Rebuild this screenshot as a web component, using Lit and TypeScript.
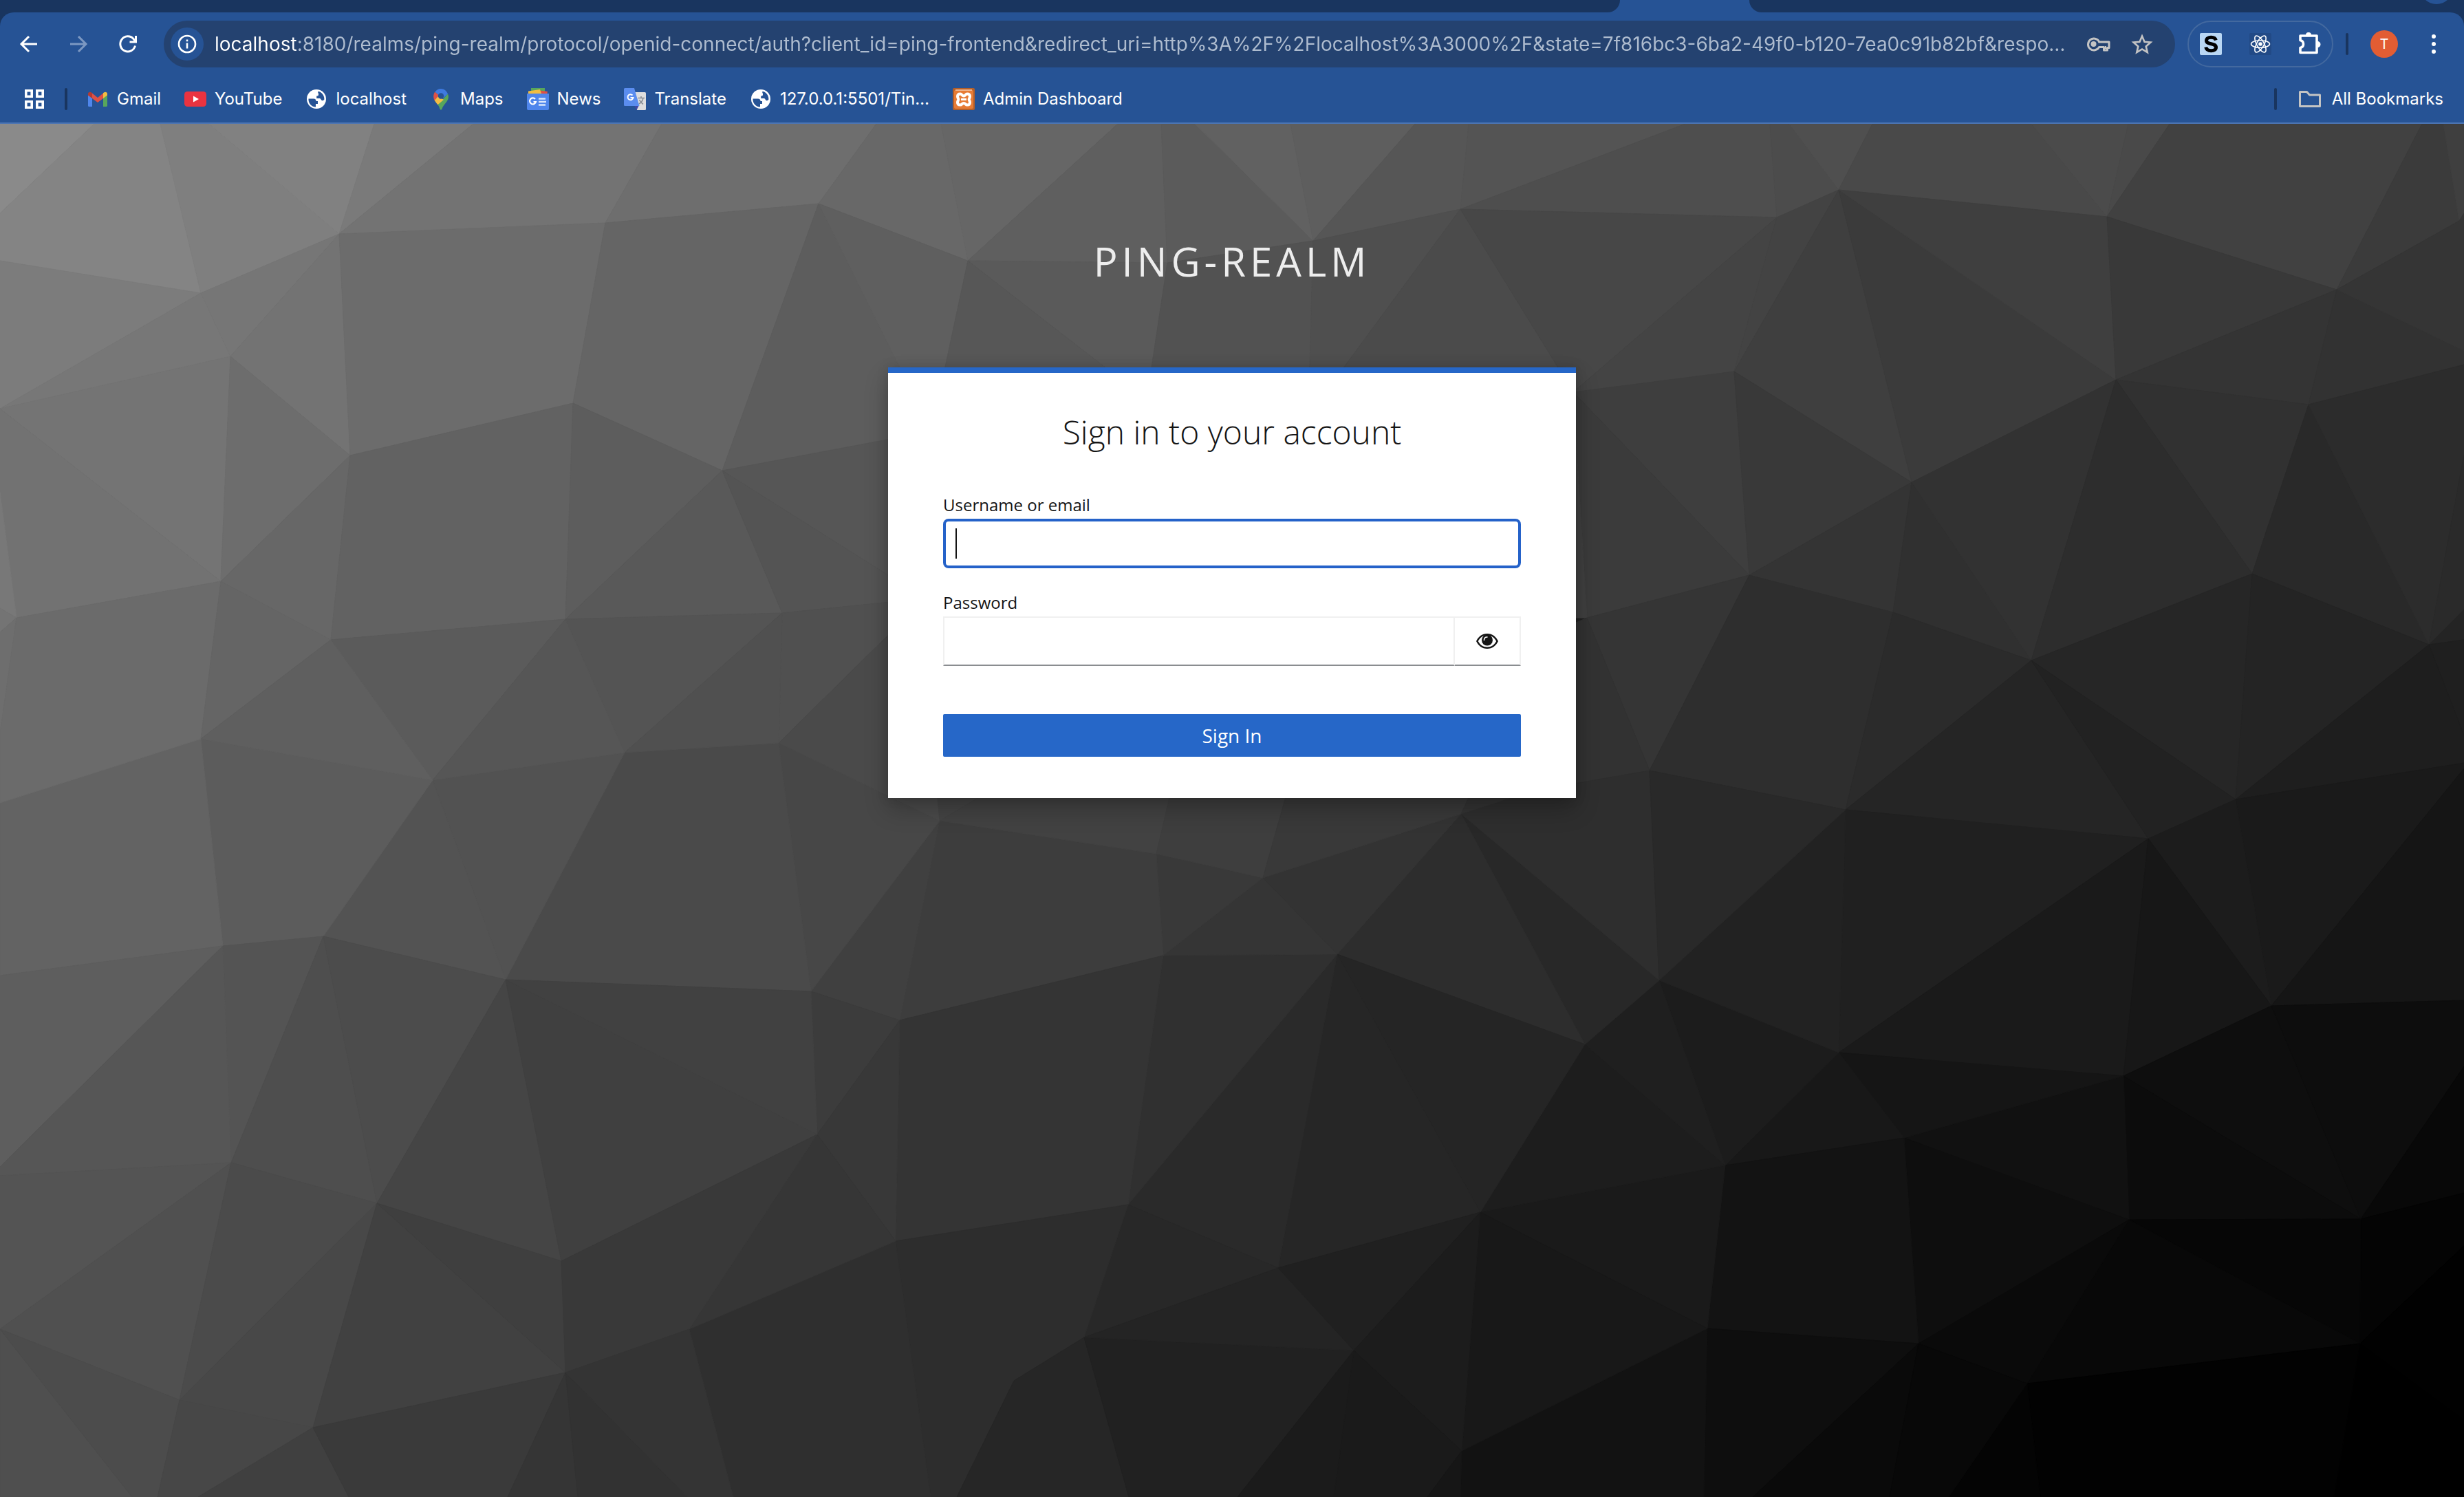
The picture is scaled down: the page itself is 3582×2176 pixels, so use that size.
import { LitElement, html, css, svg, TemplateResult } from "lit";
import { customElement, state } from "lit/decorators.js";

/* Facets of the page backdrop: grey level (hex) and the corner points. */
const FACETS: [string, string][] = [
  ["8a", "0,180 137,180 0,310"],
  ["84", "137,180 233,180 292,426 0,379 0,310"],
  ["7f", "233,180 304,180 493,340 292,426"],
  ["81", "304,180 544,180 493,340"],
  ["7a", "544,180 688,180 493,340"],
  ["73", "688,180 962,180 880,324 493,340"],
  ["6e", "962,180 1274,180 1190,296 880,324"],
  ["68", "1274,180 1368,180 1407,379 1190,296"],
  ["66", "1368,180 1625,180 1407,379"],
  ["5f", "1625,180 1688,180 1697,382 1407,379"],
  ["5b", "1688,180 1737,180 1909,350 1697,382"],
  ["61", "1737,180 1876,180 1909,350"],
  ["5e", "1876,180 2057,180 1909,350"],
  ["56", "2057,180 2135,180 2123,304 1909,350"],
  ["54", "2135,180 2450,180 2123,304"],
  ["4e", "2450,180 2573,180 2583,316 2123,304"],
  ["4c", "2573,180 2601,180 2673,276 2583,316"],
  ["4f", "2601,180 2722,180 2673,276"],
  ["49", "2722,180 2953,180 3063,315 2673,276"],
  ["4b", "2953,180 3094,180 3063,315"],
  ["49", "3094,180 3154,180 3063,315"],
  ["41", "3154,180 3521,180 3397,421 3063,315"],
  ["3b", "3521,180 3552,180 3575,321 3397,421"],
  ["3f", "3552,180 3582,180 3582,310 3575,321"],
  ["7c", "0,379 292,426 0,594"],
  ["77", "292,426 335,518 0,594"],
  ["76", "292,426 493,340 335,518"],
  ["73", "493,340 509,662 335,518"],
  ["6c", "493,340 880,324 833,586 509,662"],
  ["65", "880,324 1190,296 1050,684 833,586"],
  ["5d", "1190,296 1354,627 1050,684"],
  ["5f", "1190,296 1407,379 1354,627"],
  ["5a", "1407,379 1697,382 1667,581"],
  ["57", "1407,379 1667,581 1354,627"],
  ["52", "1697,382 1909,350 1902,604 1667,581"],
  ["4f", "1909,350 2123,304 1902,604"],
  ["4b", "2123,304 2287,570 1902,604"],
  ["47", "2123,304 2583,316 2287,570"],
  ["44", "2583,316 2521,540 2287,570"],
  ["43", "2583,316 2673,276 2521,540"],
  ["3f", "2673,276 2779,701 2521,540"],
  ["3b", "2673,276 3076,552 2779,701"],
  ["3f", "2673,276 3063,315 3076,552"],
  ["39", "3063,315 3397,421 3076,552"],
  ["34", "3397,421 3356,588 3076,552"],
  ["31", "3076,552 3356,588 3274,834"],
  ["32", "3397,421 3582,510 3582,530 3356,588"],
  ["35", "3397,421 3575,321 3582,310 3582,510"],
  ["29", "3356,588 3531,937 3274,834"],
  ["2c", "3356,588 3582,530 3582,661 3531,937"],
  ["2a", "3531,937 3582,661 3582,886"],
  ["24", "3531,937 3582,886 3582,930"],
  ["1f", "3531,937 3582,930 3582,1069"],
  ["3e", "2287,570 2521,540 2543,836"],
  ["3b", "2287,570 2543,836 2307,898"],
  ["40", "2287,570 2307,898 2280,898"],
  ["39", "2521,540 2779,701 2543,836"],
  ["34", "2779,701 2752,890 2543,836"],
  ["30", "2779,701 2953,960 2752,890"],
  ["32", "2779,701 3076,552 2953,960"],
  ["2d", "3076,552 3274,834 2953,960"],
  ["35", "2543,836 2398,1120 2307,898"],
  ["2e", "2543,836 2752,890 2683,1177 2398,1120"],
  ["2b", "2752,890 2953,960 2683,1177"],
  ["32", "2280,910 2307,898 2398,1120 2280,1150"],
  ["26", "2953,960 3274,834 3250,1162"],
  ["25", "2953,960 3123,1219 2683,1177"],
  ["22", "2953,960 3250,1162 3123,1219"],
  ["24", "3274,834 3531,937 3250,1162"],
  ["1e", "3531,937 3582,1069 3582,1109 3250,1162"],
  ["1a", "3250,1162 3582,1109 3582,1117 3302,1462"],
  ["15", "3302,1462 3582,1117 3582,1454"],
  ["1c", "3250,1162 3302,1462 3123,1219"],
  ["20", "2683,1177 3123,1219 2673,1530"],
  ["1a", "3123,1219 3087,1564 2673,1530"],
  ["17", "3123,1219 3302,1462 3087,1564"],
  ["0e", "3302,1462 3432,1772 3087,1564"],
  ["0d", "3302,1462 3582,1454 3582,1550 3432,1772"],
  ["08", "3432,1772 3582,1550 3582,1734"],
  ["04", "3432,1772 3582,1734 3582,1811 3431,1953"],
  ["01", "3431,1953 3582,1811 3582,2064"],
  ["00", "3431,1953 3582,2064 3582,2176 3393,2176"],
  ["0c", "3087,1564 3432,1772 3095,1773"],
  ["06", "3095,1773 3432,1772 3431,1953"],
  ["08", "3095,1773 3431,1953 2947,2011"],
  ["02", "2947,2011 3431,1953 3393,2176 2966,2176"],
  ["04", "2947,2011 2966,2176 2833,2176"],
  ["11", "3087,1564 3095,1773 2768,1654"],
  ["0e", "2768,1654 3095,1773 2789,1953"],
  ["0a", "3095,1773 2947,2011 2789,1953"],
  ["15", "2673,1530 3087,1564 2768,1654"],
  ["18", "2673,1530 2768,1654 2508,1694"],
  ["1c", "2412,1425 2673,1530 2508,1694"],
  ["22", "2412,1425 2683,1177 2673,1530"],
  ["13", "2768,1654 2789,1953 2482,1931 2508,1694"],
  ["0e", "2482,1931 2789,1953 2548,2176 2477,2176"],
  ["12", "2482,1931 2477,2176 2123,2176 2125,2109"],
  ["0a", "2789,1953 2747,2176 2548,2176"],
  ["08", "2789,1953 2947,2011 2833,2176 2747,2176"],
  ["1a", "2152,1762 2508,1694 2482,1931"],
  ["18", "2152,1762 2482,1931 2125,2109"],
  ["1d", "2304,1518 2508,1694 2152,1762"],
  ["1f", "2304,1518 2412,1425 2508,1694"],
  ["28", "2124,1183 2412,1425 2304,1518"],
  ["2e", "2124,1183 2225,1150 2398,1120 2412,1425"],
  ["29", "2398,1120 2683,1177 2412,1425"],
  ["2d", "2124,1183 2304,1518 1944,1387"],
  ["25", "1944,1387 2304,1518 2152,1762"],
  ["26", "1944,1387 2152,1762 1858,1843"],
  ["2a", "1944,1387 1858,1843 1640,1751"],
  ["30", "1944,1387 1691,1389 1640,1751"],
  ["35", "1691,1389 1836,1276 1944,1387"],
  ["39", "1681,1241 1836,1276 1691,1389"],
  ["33", "1836,1276 2124,1183 1944,1387"],
  ["3d", "1366,1193 1681,1241 1691,1389 1308,1483"],
  ["40", "1366,1193 1308,1483 1179,1441"],
  ["34", "1308,1483 1691,1389 1640,1751 1302,1804"],
  ["28", "1640,1751 1858,1843 1576,1944"],
  ["2d", "1302,1804 1640,1751 1576,1944 1474,2007 1391,2176 1353,2176"],
  ["2f", "1302,1804 1353,2176 1066,2176 1002,1932"],
  ["26", "1474,2007 1576,1944 1641,2176 1391,2176"],
  ["21", "1576,1944 1968,1963 1799,2176 1641,2176"],
  ["24", "1576,1944 1858,1843 1968,1963"],
  ["20", "1858,1843 2152,1762 1968,1963"],
  ["1c", "2152,1762 2125,2109 1968,1963"],
  ["1a", "1968,1963 2125,2109 2075,2176 1939,2176"],
  ["1b", "1968,1963 1939,2176 1799,2176"],
  ["16", "2125,2109 2123,2176 2075,2176"],
  ["3c", "1179,1441 1308,1483 1188,1649"],
  ["38", "1188,1649 1308,1483 1302,1804"],
  ["36", "1188,1649 1302,1804 1002,1932"],
  ["47", "1132,1080 1366,1193 1179,1441"],
  ["4a", "1132,1080 1179,1441 735,1424 908,1094"],
  ["52", "629,1134 908,1094 735,1424"],
  ["53", "629,1134 735,1424 470,1361"],
  ["5c", "292,1074 629,1134 470,1361 324,1375"],
  ["63", "292,1074 324,1375 0,1418 0,1167"],
  ["5e", "324,1375 0,1696 0,1418"],
  ["54", "324,1375 470,1361 336,1690"],
  ["56", "324,1375 336,1690 0,1709 0,1696"],
  ["4e", "470,1361 548,1749 336,1690"],
  ["4c", "470,1361 735,1424 548,1749"],
  ["45", "735,1424 816,1833 548,1749"],
  ["40", "735,1424 1188,1649 816,1833"],
  ["41", "735,1424 1179,1441 1188,1649"],
  ["54", "336,1690 0,1932 0,1709"],
  ["50", "336,1690 261,2035 0,1932"],
  ["4b", "336,1690 548,1749 261,2035"],
  ["48", "548,1749 455,2075 261,2035"],
  ["41", "548,1749 822,1995 455,2075"],
  ["3f", "548,1749 816,1833 822,1995"],
  ["39", "816,1833 1188,1649 1002,1932 822,1995"],
  ["4f", "0,1932 192,2176 0,2176"],
  ["4c", "0,1932 261,2035 229,2176 192,2176"],
  ["47", "261,2035 455,2075 288,2176 229,2176"],
  ["40", "455,2075 507,2176 288,2176"],
  ["3a", "455,2075 822,1995 738,2176 507,2176"],
  ["35", "822,1995 840,2176 738,2176"],
  ["32", "822,1995 999,2176 840,2176"],
  ["34", "822,1995 1002,1932 1066,2176 999,2176"],
  ["74", "0,594 335,518 321,845"],
  ["72", "0,594 321,845 24,898 0,715"],
  ["78", "0,715 24,898 0,884"],
  ["74", "0,884 24,898 0,919"],
  ["6e", "24,898 0,1066 0,919"],
  ["6b", "24,898 321,845 292,1074 0,1167 0,1066"],
  ["6d", "335,518 509,662 321,845"],
  ["67", "509,662 481,930 321,845"],
  ["65", "321,845 481,930 292,1074"],
  ["62", "509,662 833,586 822,900 481,930"],
  ["5d", "833,586 1050,684 822,900"],
  ["59", "1050,684 1137,891 822,900"],
  ["56", "1050,684 1354,627 1345,870"],
  ["54", "1050,684 1345,870 1137,891"],
  ["50", "1137,891 1345,870 1132,1080"],
  ["4a", "1345,870 1366,1193 1132,1080"],
  ["5b", "481,930 822,900 629,1134"],
  ["5f", "481,930 629,1134 292,1074"],
  ["54", "822,900 1137,891 908,1094"],
  ["56", "822,900 908,1094 629,1134"],
  ["50", "1137,891 1132,1080 908,1094"],
  ["44", "1362,1150 1430,1155 1366,1193"],
  ["42", "1366,1193 1430,1155 1701,1155 1681,1241"],
  ["3e", "1681,1241 1701,1155 1870,1155 1836,1276"],
  ["39", "1836,1276 1870,1155 2137,1155 2124,1183"],
  ["33", "2124,1183 2137,1155 2225,1150"],
];

const icon = (name: string, size: string, body: TemplateResult) =>
  html`<svg class="icon ${name}" viewBox=${size} aria-hidden="true">${body}</svg>`;

const globe = () => icon("globe", "0 0 32 32", svg`
  <circle cx="16" cy="16" r="14" fill="#fff"/>
  <path fill="#265395" d="M4.500 15.500h7.500c2.500 0 3.500 1.500 3.500 3.500h2.500v4h-3v4.600c-6.500-.4-11-5.800-10.500-12.100zM18.500 4.800c5.500 1.200 9.100 6 8.900 11.700-.8 1.400-2.200 2-3.400 1.500-1.400-.6-1.400-2.800-3.200-3.100h-4.600v-3.400c2.800.2 2.800-.9 2.800-2.500v-1c-.9-.6-.9-2-.5-3.200z"/>`);

const BOOKMARKS: { label: string; glyph: () => TemplateResult }[] = [
  { label: "Gmail", glyph: () => icon("", "0 0 32 32", svg`
      <path fill="#4f86ec" d="M2 10l6 4.500V27H3.500A1.500 1.500 0 0 1 2 25.500z"/>
      <path fill="#58a65c" d="M30 10l-6 4.500V27h4.500a1.500 1.500 0 0 0 1.500-1.500z"/>
      <path fill="#de5145" d="M8 7.500l8 6.500 8-6.500v7.500l-8 6-8-6z"/>
      <path fill="#b63a31" d="M2 8.500C2 6 5 5 7 6.500l1 .8V15l-6-4.500z"/>
      <path fill="#f2bd42" d="M30 8.500C30 6 27 5 25 6.500l-1 .8V15l6-4.500z"/>`) },
  { label: "YouTube", glyph: () => icon("", "0 0 32 32", svg`
      <rect y="5" width="32" height="22" rx="4.500" fill="#ea3340"/>
      <path fill="#fff" d="M13 11.500v9l8-4.500z"/>`) },
  { label: "localhost", glyph: globe },
  { label: "Maps", glyph: () => icon("", "0 0 32 32", svg`
      <path fill="#58a65c" d="M26 8.500c2.600 6-.6 10.300-4 14.200-2.600 3-3.700 5.300-4.400 7.600-.5 1.900-2.700 1.900-3.200 0-.6-2-1.300-3.900-3-6.100z"/>
      <path fill="#f2bd42" d="M12 11.500l8 5.500-8.600 7.200C9.600 22 7.800 19.800 6.500 17.500z"/>
      <path fill="#de5145" d="M7.300 5.500l6 5-6.800 7.500C4.500 13.500 4.900 8.800 7.300 5.500z"/>
      <path fill="#3f7ae0" d="M7.300 5.500C9.400 2.800 12.400 1 16 1c4.500 0 8.300 3 10 7.500l-6.500 6-6.200-4z"/>
      <circle cx="16" cy="11.500" r="4.200" fill="#265395"/>`) },
  { label: "News", glyph: () => icon("", "0 0 32 32", svg`
      <path fill="#58a65c" d="M6 0h20v6H6z"/>
      <path fill="#de5145" d="M15 3l15 2-1 5H14z"/>
      <path fill="#f2bd42" d="M2 4.500L19 2l2 6H2z"/>
      <path fill="#4f86ec" d="M0 8h32v22a2 2 0 0 1-2 2H2a2 2 0 0 1-2-2z"/>
      <path fill="none" stroke="#fff" stroke-width="2.200" d="M12 16a4.500 4.500 0 1 0 1 4H9.500"/>
      <path stroke="#dce7fb" stroke-width="2.400" d="M17 15.500h10M17 20h11M17 24.500h10"/>`) },
  { label: "Translate", glyph: () => icon("", "0 0 32 32", svg`
      <path fill="#dedede" d="M14 6h16.500A1.500 1.500 0 0 1 32 7.500v23a1.500 1.500 0 0 1-1.500 1.500H19z"/>
      <path fill="#4148a8" d="M15 25h7l-3.500 7z"/>
      <path fill="#5b8def" d="M1.500 0H15l7.500 26H1.500A1.500 1.500 0 0 1 0 24.500v-23A1.500 1.500 0 0 1 1.500 0z"/>
      <path fill="none" stroke="#fff" stroke-width="2" d="M12.500 10.500a4 4 0 1 0 1 3.500H9.500"/>
      <path fill="none" stroke="#8a8f96" stroke-width="1.600" d="M20.500 14.500H30M25 12v2.500M28 14.500c-.8 4-3 6.800-6 8.500M22.500 17c1 2.500 3 4.800 5.500 6.500"/>`) },
  { label: "127.0.0.1:5501/Tin…", glyph: globe },
  { label: "Admin Dashboard", glyph: () => icon("", "0 0 32 32", svg`
      <rect width="32" height="32" rx="2" fill="#b35f2a"/>
      <rect x="2" y="3" width="28" height="27" rx="2" fill="#e77b35"/>
      <path stroke="#efb58d" stroke-width="2" d="M4 3h24"/>
      <path fill="none" stroke="#fff" stroke-width="4" stroke-linejoin="round" d="M11 8.500c-3 0-4 1.600-4 3.600 0 2.200 1.300 2.900 1.300 4.400S7 18.700 7 21c0 2.100 1.200 3.500 4 3.500 2.500 0 2.500-2.500 5-2.500s2.500 2.500 5 2.500c2.800 0 4-1.400 4-3.500 0-2.300-1.300-3-1.300-4.500s1.300-2.200 1.300-4.400c0-2-1-3.600-4-3.600-2.500 0-2.500 3-5 3s-2.500-3-5-3z"/>
      <path stroke="#fff" stroke-width="3" d="M12 16.500h8"/>`) },
];

const ADDRESS =
  "localhost:8180/realms/ping-realm/protocol/openid-connect/auth?client_id=ping-frontend&redirect_uri=http%3A%2F%2Flocalhost%3A3000%2F&state=7f816bc3-6ba2-49f0-b120-7ea0c91b82bf&respo…";

@customElement("browser-bar")
class BrowserBar extends LitElement {
  static styles = css`
    :host { display: block; background: #19355f; color: #fff; font-family: Inter, "Liberation Sans", sans-serif; }
    * { box-sizing: border-box; }
    button { border: 0; padding: 0; background: none; color: inherit; font: inherit; display: flex; align-items: center; justify-content: center; }
    .icon { width: 32px; height: 32px; flex: none; display: block; overflow: visible; }
    .tabs { display: flex; height: 18px; background: #265395; overflow: hidden; position: relative; }
    .strip { background: #19355f; }
    .strip.before { flex: 34; border-bottom-right-radius: 24px; }
    .strip.after { flex: 15; border-bottom-left-radius: 24px; }
    .tab { width: 188px; }
    .search { position: absolute; right: 16px; top: -42px; width: 48px; height: 48px; border-radius: 24px; background: #265395; }
    .bars { background: #265395; border-radius: 20px 20px 0 0; border-bottom: 2px solid #4c75b3; }
    .toolbar { display: flex; align-items: center; padding: 12px 32px 0 22px; }
    .nav { display: flex; gap: 32px; margin-right: 32px; }
    .nav button { width: 40px; height: 40px; }
    .dim { color: #7c98c2; }
    .address { flex: 1; min-width: 0; height: 68px; border-radius: 34px; background: #244270; display: flex; align-items: center; padding: 0 32px 0 10px; }
    .site { width: 48px; height: 48px; border-radius: 24px; background: #265395; margin-right: 16px; }
    .url { flex: 1; min-width: 0; border: 0; outline: 0; padding: 0; height: 40px; font: 400 28px/40px Inter, "Liberation Sans", sans-serif; color: transparent; background: linear-gradient(90deg, #fff 120px, #aebccf 120px); background-clip: text; -webkit-background-clip: text; }
    .actions { display: flex; gap: 32px; color: #c4c4c4; margin-left: 24px; }
    .extensions { display: flex; align-items: center; gap: 40px; height: 68px; border: 2px solid #43699f; border-radius: 34px; padding: 0 16px; margin: 0 18px; }
    .rule { width: 4px; height: 32px; border-radius: 2px; background: #19355f; flex: none; }
    .avatar { width: 40px; height: 40px; border-radius: 20px; background: #e25d33; font-size: 20px; margin: 0 32px; }
    .bookmarks { display: flex; align-items: center; height: 80px; padding: 12px 30px 0 34px; font-size: 24px; line-height: 32px; font-weight: 400; }
    .bookmarks .rule { margin: 0 28px 0 28px; }
    .bookmarks .rule.end { margin-right: 32px; }
    .list { display: flex; gap: 34px; flex: 1; }
    .mark { display: flex; align-items: center; gap: 12px; color: inherit; text-decoration: none; white-space: nowrap; }
    .all { gap: 16px; white-space: nowrap; }
  `;

  render() {
    return html`
      <div class="tabs">
        <div class="strip before"></div><div class="tab"></div><div class="strip after"></div>
        <button class="search" aria-label="Search tabs"></button>
      </div>
      <div class="bars">
        <div class="toolbar">
          <div class="nav">
            <button aria-label="Back">${icon("", "0 0 32 32", svg`<path fill="none" stroke="#fff" stroke-width="3" d="M28 16H5.500M16 5L5 16l11 11"/>`)}</button>
            <button class="dim" aria-label="Forward">${icon("", "0 0 32 32", svg`<path fill="none" stroke="currentColor" stroke-width="3" d="M4 16h22.500M16 5l11 11-11 11"/>`)}</button>
            <button aria-label="Reload">${icon("", "0 0 32 32", svg`<path fill="none" stroke="#fff" stroke-width="3" d="M26.500 18.500A11 11 0 1 1 24 8.500l3 3.500M27.500 4v9h-9"/>`)}</button>
          </div>
          <div class="address">
            <button class="site" aria-label="Site information">${icon("", "0 0 32 32", svg`<circle cx="16" cy="16" r="12" fill="none" stroke="#fff" stroke-width="2.600"/><path stroke="#fff" stroke-width="2.600" d="M16 14.500v8M16 9.500v2.800"/>`)}</button>
            <input class="url" type="text" aria-label="Address" spellcheck="false" .value=${ADDRESS} />
            <div class="actions">
              <button aria-label="Passwords">${icon("", "0 0 32 32", svg`<path fill="none" stroke="currentColor" stroke-width="3" stroke-linejoin="round" d="M17.500 13H32v8.500h-2.500V25h-5v-4.500H17.500A8.500 8.500 0 1 1 17.500 12.500z"/><circle cx="9.500" cy="16" r="4" fill="currentColor"/><path stroke="currentColor" stroke-width="2" d="M27 19v4"/>`)}</button>
              <button aria-label="Bookmark this page">${icon("", "0 0 32 32", svg`<path fill="none" stroke="currentColor" stroke-width="2.600" d="M16 4.500l3.500 8.200 8.900.8-6.700 5.900 2 8.700L16 23.500l-7.700 4.600 2-8.700-6.700-5.900 8.900-.8z"/>`)}</button>
            </div>
          </div>
          <div class="extensions">
            <button aria-label="Styles extension">${icon("", "0 0 32 32", svg`<rect width="32" height="32" rx="2" fill="#b9d7f4"/><path fill="none" stroke="#000" stroke-width="5" d="M23.300 10.500C22.500 7.500 20 6.300 16.300 6.300c-4 0-6.800 1.600-6.800 4.700 0 6.500 14 3 14 9.800 0 3.200-3 5-7.100 5-4.300 0-7-1.900-7.700-5.200"/>`)}</button>
            <button aria-label="React tools">${icon("", "0 0 32 32", svg`<rect width="32" height="32" rx="2" fill="#224a86"/><g fill="none" stroke="#fff" stroke-width="1.600"><ellipse cx="16" cy="16" rx="13.500" ry="5.200"/><ellipse cx="16" cy="16" rx="13.500" ry="5.200" transform="rotate(60 16 16)"/><ellipse cx="16" cy="16" rx="13.500" ry="5.200" transform="rotate(120 16 16)"/></g><circle cx="16" cy="16" r="2.800" fill="#fff"/>`)}</button>
            <button aria-label="Extensions">${icon("", "0 0 32 32", svg`<path fill="none" stroke="#fff" stroke-width="3.600" stroke-linejoin="round" d="M2 4h24v24.500H2v-7c6-1.500 6-9.500 0-11z"/><path fill="#fff" d="M10 3a4 4 0 0 1 8 0zM27 12a4.500 4.500 0 0 1 0 9z"/>`)}</button>
          </div>
          <span class="rule"></span>
          <button class="avatar" aria-label="Profile">T</button>
          <button aria-label="Menu">${icon("", "0 0 32 32", svg`<g fill="#fff"><circle cx="20" cy="5" r="3"/><circle cx="20" cy="16" r="3"/><circle cx="20" cy="27" r="3"/></g>`)}</button>
        </div>
        <nav class="bookmarks">
          <button aria-label="Apps">${icon("", "0 0 32 32", svg`<path fill="none" stroke="#fff" stroke-width="3.600" d="M3.800 3.800h8.400v8.400H3.800zM19.800 3.800h8.400v8.400h-8.400zM3.800 19.800h8.400v8.400H3.800zM19.800 19.800h8.400v8.400h-8.400z"/>`)}</button>
          <span class="rule"></span>
          <div class="list">
            ${BOOKMARKS.map((b) => html`<a class="mark" href="#">${b.glyph()}<span>${b.label}</span></a>`)}
          </div>
          <span class="rule end"></span>
          <button class="all">${icon("", "0 0 32 32", svg`<path fill="none" stroke="#c4c4c4" stroke-width="3" stroke-linejoin="round" d="M1.500 5.500h10l4 4.500h15v16.500h-29z"/>`)}<span>All Bookmarks</span></button>
        </nav>
      </div>
    `;
  }
}

@customElement("app-root")
class AppRoot extends LitElement {
  @state() private revealed = false;

  static styles = css`
    :host { display: flex; flex-direction: column; min-height: 100vh; font-family: "Open Sans", "Noto Sans", sans-serif; color: #151515; }
    * { box-sizing: border-box; }
    .page { flex: 1; position: relative; display: flex; flex-direction: column; align-items: center; background: #222; overflow: hidden; }
    .backdrop { position: absolute; inset: 0; width: 100%; height: 100%; }
    .realm { position: relative; margin: 0; padding: 162px 20px 116px; font-size: 58px; line-height: 76px; font-weight: 400; letter-spacing: 6px; text-transform: uppercase; color: #ededed; }
    .card { position: relative; width: 1000px; max-width: 100%; background: #fff; border-top: 8px solid #2667c8; padding: 54px 80px 60px; box-shadow: 0 16px 32px rgba(3, 3, 3, 0.24), 0 0 16px rgba(3, 3, 3, 0.14); }
    .title { margin: 0 0 56px; text-align: center; font-size: 48px; line-height: 64px; font-weight: 300; }
    .label { display: block; font-size: 24px; line-height: 36px; padding-bottom: 2px; }
    .field { position: relative; display: flex; height: 72px; margin-bottom: 32px; }
    .box { flex: 1; min-width: 0; border: 2px solid #f0f0f0; border-bottom-color: #8a8d90; border-radius: 0; padding: 0 16px; font: 400 32px/48px "Open Sans", sans-serif; outline: 0; background: #fff; }
    .box.active { border: 4px solid #2562c9; border-radius: 8px; caret-color: transparent; }
    .caret { position: absolute; left: 18px; top: 14px; width: 2px; height: 44px; background: #151515; }
    .reveal { width: 96px; border: 2px solid #f0f0f0; border-left: 0; border-bottom-color: #8a8d90; background: #fff; padding: 0; display: flex; align-items: center; justify-content: center; }
    .eye { width: 32px; height: 32px; }
    .submit { display: block; width: 100%; height: 62px; margin-top: 70px; border: 0; border-radius: 2px; background: #2667c8; color: #fff; font: 400 28px/40px "Open Sans", sans-serif; }
  `;

  render() {
    return html`
      <browser-bar></browser-bar>
      <main class="page">
        <svg class="backdrop" viewBox="0 180 3582 1996" preserveAspectRatio="none" aria-hidden="true">
          ${FACETS.map(([g, points]) => svg`<polygon points=${points} fill=${`#${g}${g}${g}`} stroke=${`#${g}${g}${g}`} stroke-width="1"/>`)}
        </svg>
        <h1 class="realm">ping-realm</h1>
        <form class="card" @submit=${(e: Event) => e.preventDefault()}>
          <h2 class="title">Sign in to your account</h2>
          <label class="label" for="username">Username or email</label>
          <div class="field">
            <input class="box active" id="username" type="text" autocomplete="username" />
            <span class="caret"></span>
          </div>
          <label class="label" for="password">Password</label>
          <div class="field">
            <input class="box" id="password" type=${this.revealed ? "text" : "password"} autocomplete="current-password" />
            <button class="reveal" type="button" aria-label="Show password" @click=${() => (this.revealed = !this.revealed)}>
              <svg class="eye" viewBox="0 0 32 32" aria-hidden="true">
                <path fill="#151515" fill-rule="evenodd" d="M16 5C8.500 5 3 9.500 0 16c3 6.500 8.500 11 16 11s13-4.500 16-11C29 9.500 23.500 5 16 5zm0 2.500c6 0 10.600 3.300 13.200 8.500-2.600 5.200-7.200 8.500-13.200 8.500S5.400 21.200 2.800 16C5.400 10.800 10 7.500 16 7.500z"/>
                <circle cx="16" cy="14.500" r="8" fill="#151515"/>
                <path fill="none" stroke="#fff" stroke-width="1.600" stroke-linecap="round" d="M11.500 14.500c0-2.700 1.800-4.500 4.500-4.500"/>
              </svg>
            </button>
          </div>
          <button class="submit" type="submit">Sign In</button>
        </form>
      </main>
    `;
  }
}
